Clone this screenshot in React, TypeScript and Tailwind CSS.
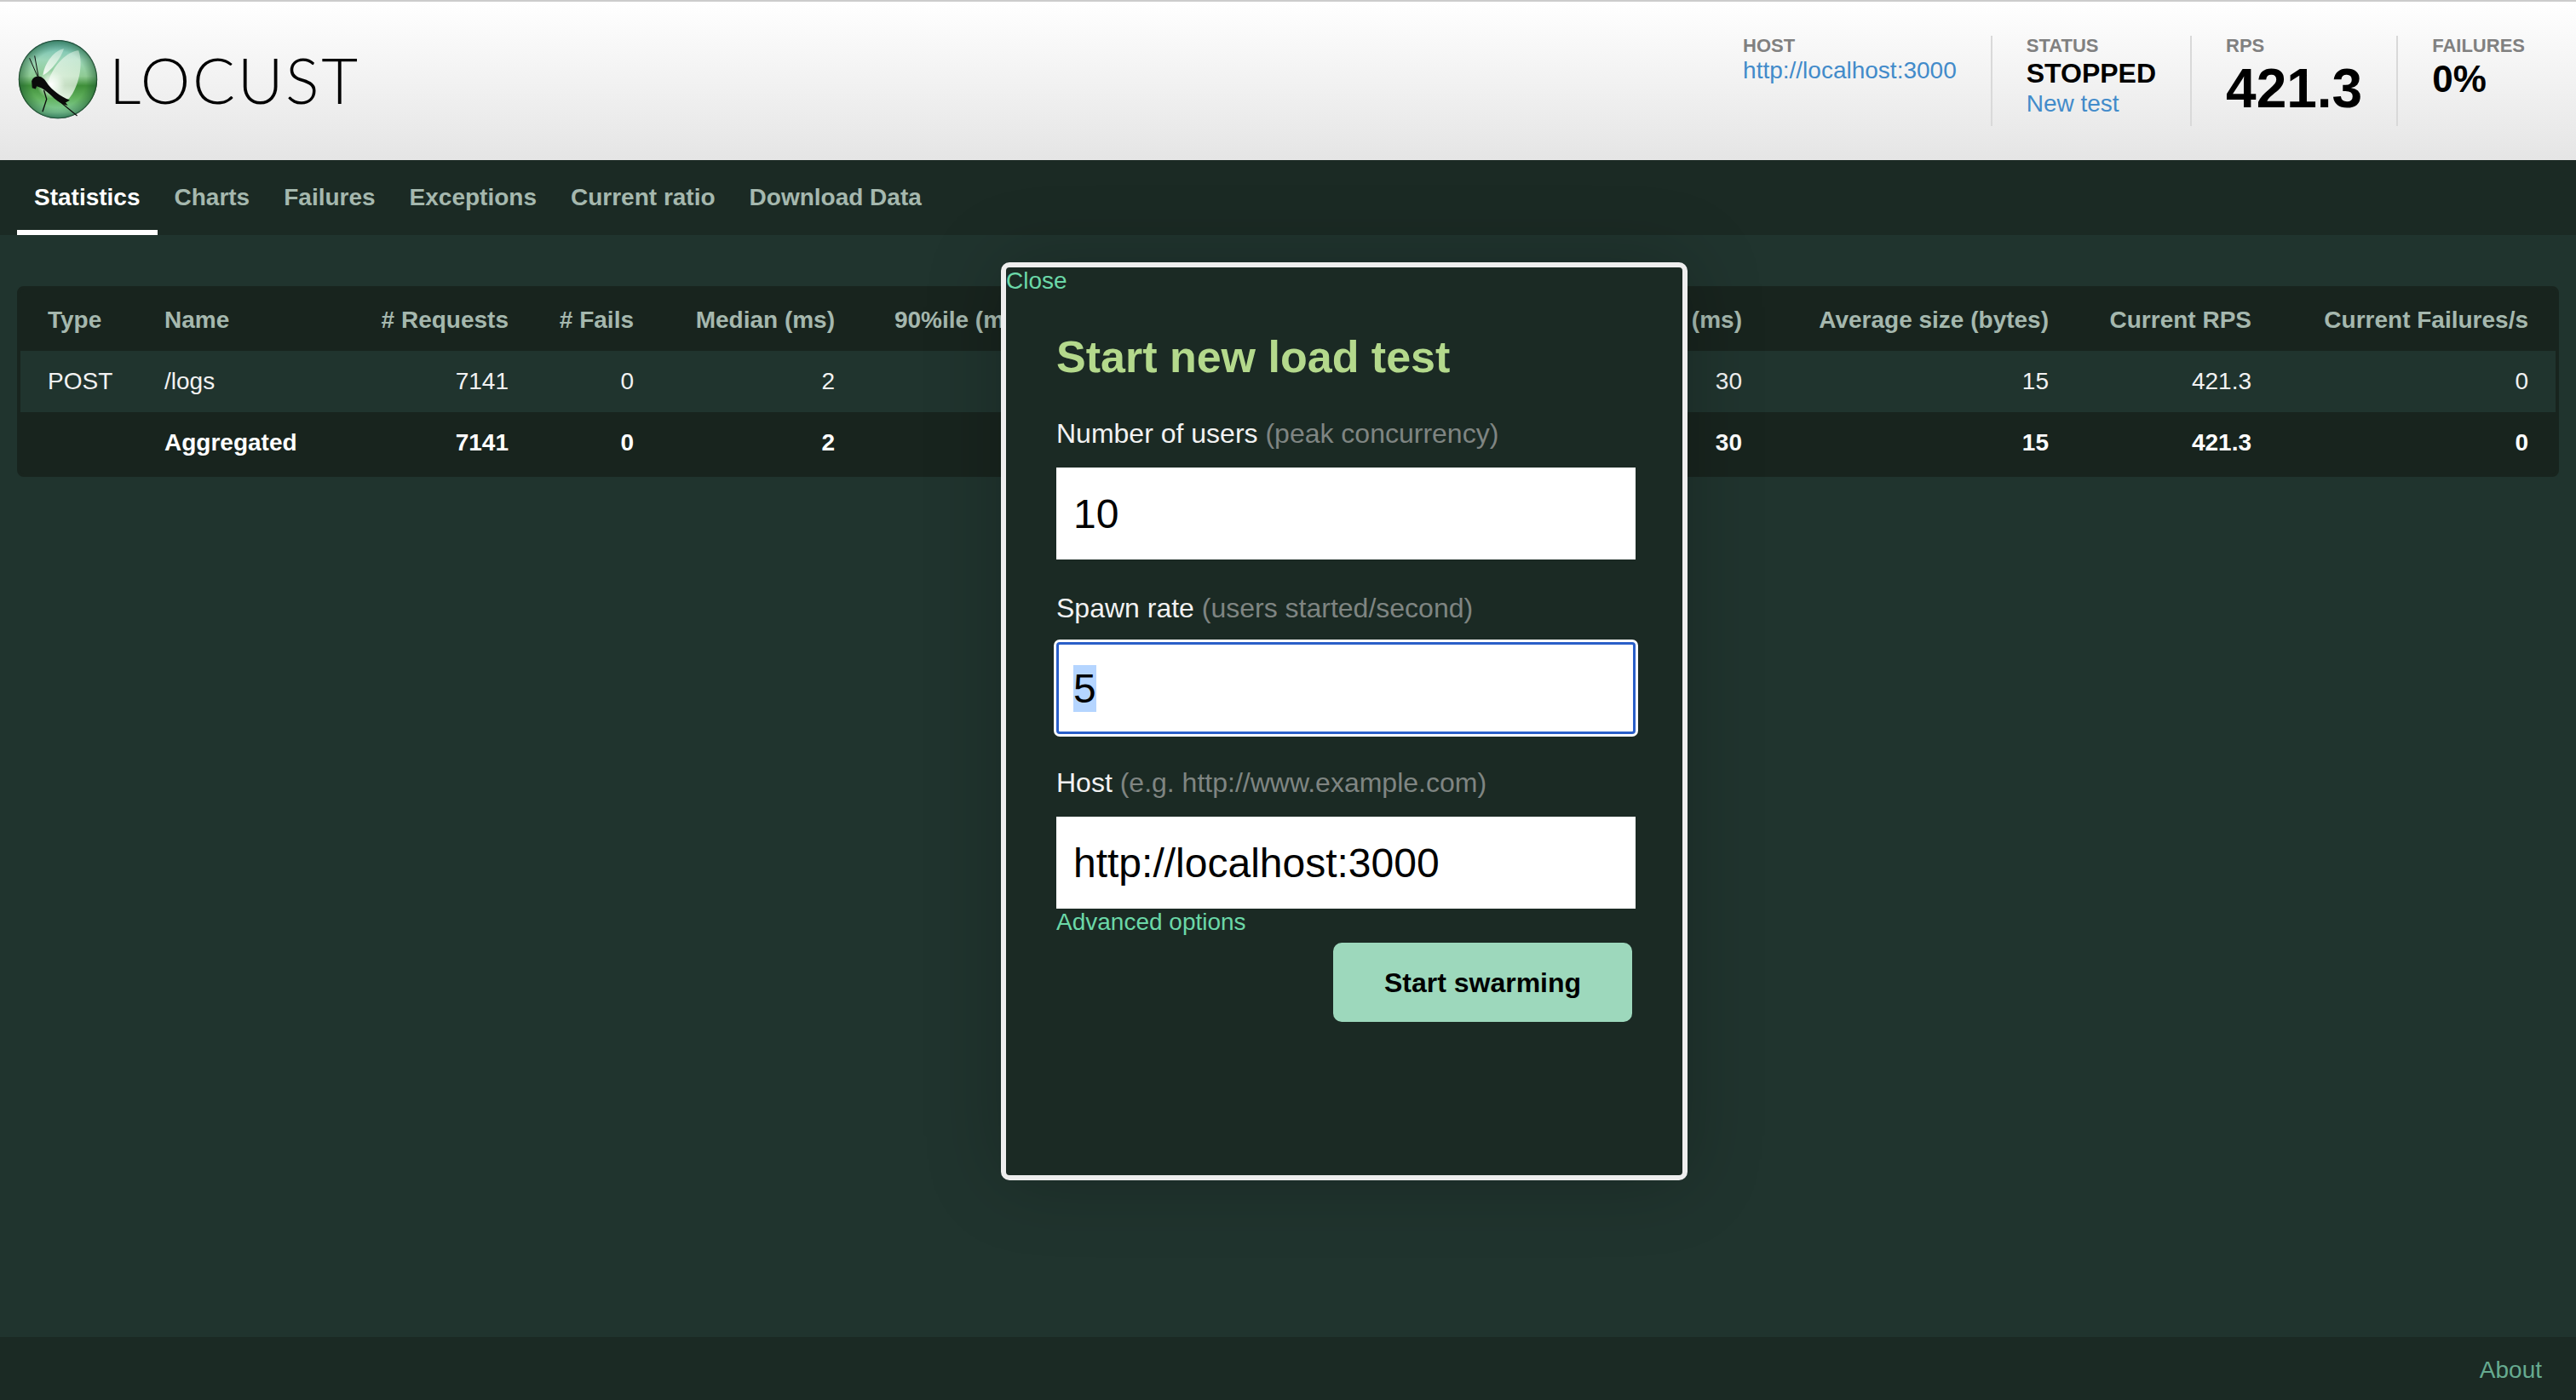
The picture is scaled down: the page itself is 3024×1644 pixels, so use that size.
import { useEffect, useRef } from "react";

const COLUMNS = [
  { label: "Type", width: "w-[137px]", left: true },
  { label: "Name", width: "w-[246px]", left: true },
  { label: "# Requests", width: "w-[222px]" },
  { label: "# Fails", width: "w-[147px]" },
  { label: "Median (ms)", width: "w-[236px]" },
  { label: "90%ile (ms)", width: "w-[224px]" },
  { label: "99%ile (ms)", width: "w-[240px]" },
  { label: "Average (ms)", width: "w-[240px]" },
  { label: "Min (ms)", width: "w-[170px]" },
  { label: "Max (ms)", width: "w-[191px]" },
  { label: "Average size (bytes)", width: "w-[360px]" },
  { label: "Current RPS", width: "w-[238px]" },
  { label: "Current Failures/s", width: "w-auto" },
];

// the cells under the dialog are covered, only the visible ones hold a value
const ROWS = [
  { cells: ["POST", "/logs", "7141", "0", "2", "", "", "", "", "30", "15", "421.3", "0"], bold: false },
  { cells: ["", "Aggregated", "7141", "0", "2", "", "", "", "", "30", "15", "421.3", "0"], bold: true },
];

const TABS = ["Statistics", "Charts", "Failures", "Exceptions", "Current ratio", "Download Data"];

const statLabelCls = "text-[22px] font-bold leading-[24px] text-[#808080]";
const statItemCls = "h-[106px] border-l-2 border-[#d9d9d9] pl-[40px] pr-[40px]";
const fieldLabelCls = "block text-[32px] leading-[40px] text-[#f2f2f2]";
const fieldHintCls = "text-[#7f8582]";
const inputCls = "mt-[20px] block h-[108px] w-[680px] bg-white px-5 text-[48px] text-black outline-none";

function LocustLogo({ className }: { className: string }) {
  return (
    <svg viewBox="64 80 282 286" className={className} aria-hidden>
      <defs>
        <linearGradient id="ball" x1="0" y1="0" x2="0" y2="1">
          <stop offset="0" stopColor="#63b5b0" />
          <stop offset="0.25" stopColor="#9cd6b8" />
          <stop offset="0.46" stopColor="#8fcb94" />
          <stop offset="0.58" stopColor="#3f8f3a" />
          <stop offset="0.74" stopColor="#62b25e" />
          <stop offset="0.92" stopColor="#86cfa0" />
          <stop offset="1" stopColor="#5fb09a" />
        </linearGradient>
        <radialGradient id="rim" cx="0.5" cy="0.5" r="0.5">
          <stop offset="0.72" stopColor="#1c5a30" stopOpacity="0" />
          <stop offset="0.96" stopColor="#1c5a30" stopOpacity="0.5" />
          <stop offset="1" stopColor="#0f2c1e" stopOpacity="1" />
        </radialGradient>
        <radialGradient id="glow" cx="0.5" cy="0.5" r="0.5">
          <stop offset="0" stopColor="#ffffff" stopOpacity="1" />
          <stop offset="0.5" stopColor="#f2fbf2" stopOpacity="0.7" />
          <stop offset="1" stopColor="#e8f8e8" stopOpacity="0" />
        </radialGradient>
        <linearGradient id="wing" x1="0.7" y1="0" x2="0.3" y2="1">
          <stop offset="0" stopColor="#f4fbf0" stopOpacity="0.45" />
          <stop offset="1" stopColor="#ffffff" stopOpacity="0.85" />
        </linearGradient>
      </defs>
      <circle cx="205" cy="222" r="139" fill="url(#ball)" />
      <circle cx="205" cy="222" r="139" fill="url(#rim)" />
      <path d="M226 114C196 118 158 160 152 208C176 196 214 152 226 114Z" fill="url(#wing)" />
      <path d="M278 120C240 122 188 170 170 232C190 280 226 300 244 290C278 250 296 170 278 120Z" fill="url(#wing)" />
      <circle cx="180" cy="240" r="50" fill="url(#glow)" />
      <g stroke="#0c0c0c" fill="none" strokeLinecap="round">
        <path d="M105 148L134 214" strokeWidth="3" />
        <path d="M123 140L136 212" strokeWidth="3" />
        <path d="M156 262L165 292L151 335" strokeWidth="4" />
        <path d="M206 296L272 350" strokeWidth="3.5" />
      </g>
      <path
        d="M112 228C116 216 126 211 138 212C150 213 160 224 170 240C184 258 210 280 247 296L232 304L240 314C220 312 200 298 184 282C172 270 160 260 146 252L130 246L126 256L114 252Z"
        fill="#0a0a0a"
      />
    </svg>
  );
}

export default function App() {
  const spawnRate = useRef<HTMLInputElement>(null);

  useEffect(() => {
    spawnRate.current?.focus();
    spawnRate.current?.select();
  }, []);

  return (
    <div className="relative flex min-h-screen flex-col bg-[#20342e] font-['Liberation_Sans',Arial,sans-serif] text-[28px] text-[#f2f2f2]">
      <header className="flex h-[188px] items-start justify-between border-t-2 border-[#cccccc] bg-linear-to-b from-white to-[#e5e5e5] pr-[20px]">
        <div className="ml-[21px] mt-[44px] flex items-center gap-[13px]">
          <LocustLogo className="h-[95px] w-[94px] shrink-0" />
          <span className="font-['Lato',sans-serif] text-[74px] font-light leading-[95px] tracking-[0.035em] text-black">
            LOCUST
          </span>
        </div>
        <div className="mt-[40px] flex">
          <div className="h-[106px] pr-[40px]">
            <div className={statLabelCls}>HOST</div>
            <div className="leading-[34px] text-[#428bca]">http://localhost:3000</div>
          </div>
          <div className={statItemCls}>
            <div className={statLabelCls}>STATUS</div>
            <div className="text-[32px] font-bold leading-[40px] text-black">STOPPED</div>
            <a className="mt-[2px] block leading-[28px] text-[#428bca]">New test</a>
          </div>
          <div className={statItemCls}>
            <div className={statLabelCls}>RPS</div>
            <div className="text-[64px] font-bold leading-[76px] text-black">421.3</div>
          </div>
          <div className={statItemCls}>
            <div className={statLabelCls}>FAILURES</div>
            <div className="text-[44px] font-bold leading-[54px] text-black">0%</div>
          </div>
        </div>
      </header>

      <nav className="flex h-[88px] bg-[#1b2a24] pl-[20px]">
        {TABS.map((tab, i) => (
          <a
            key={tab}
            className={`h-[88px] border-b-[6px] px-5 pt-[28px] font-bold leading-[32px] ${
              i === 0 ? "border-white text-white" : "border-transparent text-[#a5b8ae]"
            }`}
          >
            {tab}
          </a>
        ))}
      </nav>

      <main className="flex-1 px-[20px] pt-[60px]">
        <div className="overflow-hidden rounded-lg border-4 border-[#18241e] bg-[#18241e]">
          <table className="w-full table-fixed">
            <colgroup>
              {COLUMNS.map((c) => (
                <col key={c.label} className={c.width} />
              ))}
            </colgroup>
            <thead>
              <tr className="h-[72px]">
                {COLUMNS.map((c) => (
                  <th
                    key={c.label}
                    className={`whitespace-nowrap font-bold text-[#a5b8ae] ${c.left ? "pl-[32px] text-left" : "pr-[32px] text-right"}`}
                  >
                    {c.label}
                  </th>
                ))}
              </tr>
            </thead>
            <tbody>
              {ROWS.map((row) => (
                <tr key={row.cells[1]} className={`h-[72px] ${row.bold ? "bg-[#18241e] font-bold text-white" : "bg-[#20342e]"}`}>
                  {row.cells.map((cell, i) => (
                    <td key={COLUMNS[i].label} className={COLUMNS[i].left ? "pl-[32px] text-left" : "pr-[32px] text-right"}>
                      {cell}
                    </td>
                  ))}
                </tr>
              ))}
            </tbody>
          </table>
        </div>
      </main>

      <footer className="flex h-[74px] items-center justify-end bg-[#1b2a24] pr-[40px] pt-[4px]">
        <a className="text-[#66ab90]">About</a>
      </footer>

      <div
        role="dialog"
        className="absolute left-[1175px] top-[308px] h-[1078px] w-[806px] rounded-[10px] border-[6px] border-[#eeeeee] bg-[#1b2a24] shadow-[0_0_90px_rgba(0,0,0,0.22)]"
      >
        <a className="block leading-[32px] text-[#6bd8a8]">Close</a>
        <form className="px-[59px]">
          <h2 className="mt-[43px] text-[52px] font-bold leading-[60px] text-[#b4d98c]">Start new load test</h2>

          <label className={`${fieldLabelCls} mt-[40px]`}>
            Number of users <span className={fieldHintCls}>(peak concurrency)</span>
          </label>
          <input className={inputCls} defaultValue="10" />

          <label className={`${fieldLabelCls} mt-[37px]`}>
            Spawn rate <span className={fieldHintCls}>(users started/second)</span>
          </label>
          <input
            ref={spawnRate}
            className={`${inputCls} rounded-[4px] border-[3px] border-[#2a5fc8] px-[17px] shadow-[0_0_0_3px_#ffffff] selection:bg-[#b5d5ff] selection:text-black`}
            defaultValue="5"
          />

          <label className={`${fieldLabelCls} mt-[37px]`}>
            Host <span className={fieldHintCls}>(e.g. http://www.example.com)</span>
          </label>
          <input className={inputCls} defaultValue="http://localhost:3000" />

          <a className="block leading-[31px] text-[#6bd8a8]">Advanced options</a>
          <div className="mt-[9px] flex w-[680px] justify-end pr-[4px]">
            <button
              type="button"
              className="h-[93px] w-[351px] rounded-[10px] bg-[#9dd8bc] text-[32px] font-bold text-black"
            >
              Start swarming
            </button>
          </div>
        </form>
      </div>
    </div>
  );
}
